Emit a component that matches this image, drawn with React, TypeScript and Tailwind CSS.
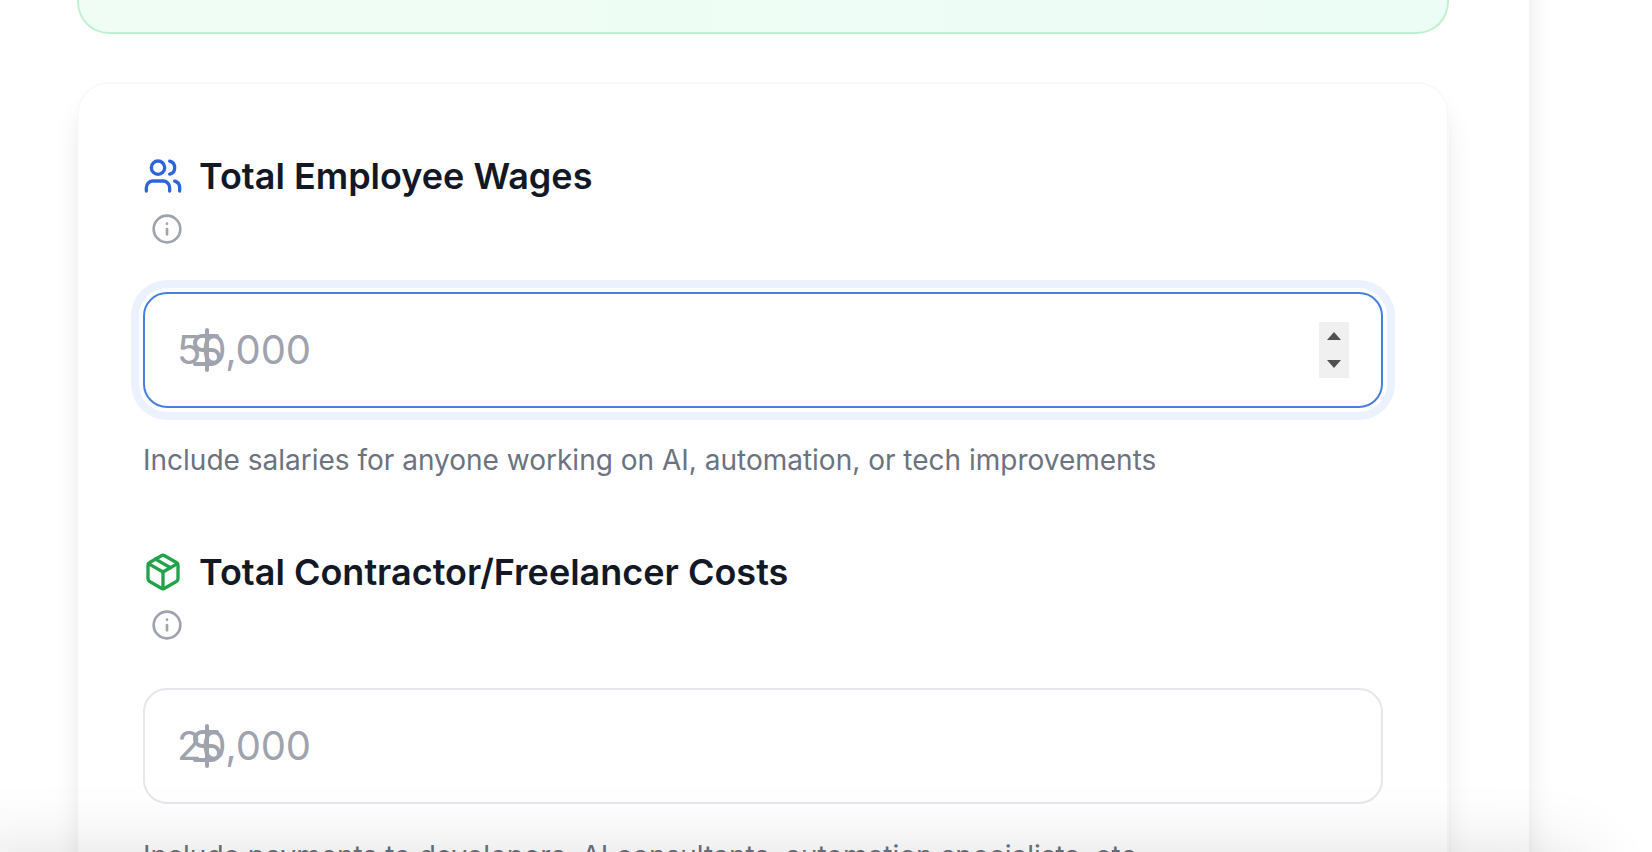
import React from "react";
import { DollarSign, Info, Package, Users, type LucideIcon } from "lucide-react";

type CostFieldProps = {
  icon: LucideIcon;
  iconClass: string;
  title: string;
  placeholder: string;
  hint: string;
  focused?: boolean;
};

function Stepper() {
  return (
    <div className="flex h-14 w-[30px] flex-col items-center justify-between bg-[#f0f0f0] py-[10px]">
      <svg width="14" height="8" viewBox="0 0 14 8" fill="#505050">
        <path d="M0 8 L7 0 L14 8Z" />
      </svg>
      <svg width="14" height="8" viewBox="0 0 14 8" fill="#505050">
        <path d="M0 0 L7 8 L14 0Z" />
      </svg>
    </div>
  );
}

function CostField({ icon: Icon, iconClass, title, placeholder, hint, focused }: CostFieldProps) {
  return (
    <section>
      <div className="flex h-14 items-center gap-4">
        <Icon className={iconClass} size={40} strokeWidth={2} />
        <h2 className="text-[36px] leading-[56px] font-semibold whitespace-nowrap text-[#121826]">{title}</h2>
      </div>
      <div className="flex h-[88px] pt-[9px] pl-2">
        <Info className="text-[#9ea3ae]" size={32} strokeWidth={2} />
      </div>
      <div
        className={
          focused
            ? "relative flex h-[116px] items-center justify-between rounded-[24px] border-2 border-[#4680dd] bg-white px-8 shadow-[0_0_0_4px_#ffffff,0_0_0_12px_#ebf2fe]"
            : "relative flex h-[116px] items-center justify-between rounded-[24px] border-2 border-[#e5e7eb] bg-white px-8"
        }
      >
        <span className="text-[40px] leading-[56px] tracking-[-0.15px] text-[#9ea3ae]">{placeholder}</span>
        {focused && <Stepper />}
        <DollarSign className="absolute top-8 left-[38px] text-[#9ea3ae]" size={48} strokeWidth={2} />
      </div>
      <p className="mt-8 text-[28px] leading-10 whitespace-nowrap text-[#6c727f]">{hint}</p>
    </section>
  );
}

export default function App() {
  return (
    <div className="relative h-[852px] w-full overflow-hidden bg-white font-['Inter',sans-serif]">
      <div className="-mt-24 h-[1200px] w-[1529px] bg-white pt-24 pr-20 pl-[77px] shadow-[0_20px_30px_-6px_rgba(0,0,0,0.12),0_8px_12px_-8px_rgba(0,0,0,0.1)]">
        <div className="h-[34px] rounded-b-[32px] border-2 border-t-0 border-[#bff1d1] bg-linear-to-r from-[#f0fdf4] to-[#ecfdf5]" />
        <main className="mt-12 flex h-[1000px] flex-col gap-16 rounded-[32px] border-2 border-[#f8f9fb] bg-white p-16 shadow-[0_20px_30px_-6px_rgba(0,0,0,0.12),0_8px_12px_-8px_rgba(0,0,0,0.1)]">
          <CostField
            icon={Users}
            iconClass="text-[#2c64dc]"
            title="Total Employee Wages"
            placeholder="50,000"
            hint="Include salaries for anyone working on AI, automation, or tech improvements"
            focused
          />
          <CostField
            icon={Package}
            iconClass="text-[#23a24c]"
            title="Total Contractor/Freelancer Costs"
            placeholder="20,000"
            hint="Include payments to developers, AI consultants, automation specialists, etc."
          />
        </main>
      </div>
      <div className="pointer-events-none absolute top-[862px] -left-10 h-40 w-[1620px] shadow-[0_0_80px_rgba(0,0,0,0.16)]" />
    </div>
  );
}
